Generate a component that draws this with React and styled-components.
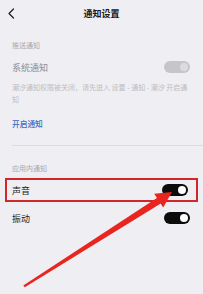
import React from "react";
import styled, { createGlobalStyle } from "styled-components";

const Global = createGlobalStyle`
  html, body { margin: 0; padding: 0; background: #efeef3; }
  body { font-family: "Noto Sans CJK SC", "Noto Sans", sans-serif; }
  * { box-sizing: border-box; }
`;

const Page = styled.div`
  position: relative;
  width: 203px;
  height: 294px;
  overflow: hidden;
  background: #efeef3;
  display: flex;
  flex-direction: column;
`;

const Header = styled.div`
  position: relative;
  height: 27px;
  display: flex;
  align-items: center;
  justify-content: center;
`;

const Back = styled.svg`
  position: absolute;
  left: 7px;
  top: 8px;
`;

const Title = styled.div`
  font-size: 9px;
  font-weight: 700;
  color: #151515;
  line-height: 1;
`;

const SectionLabel = styled.div`
  font-size: 7px;
  color: #a9a9ae;
  padding: 0 12px;
  height: 12px;
  line-height: 12px;
  margin-top: ${(p) => p.$top}px;
`;

const Row = styled.div`
  display: flex;
  align-items: center;
  justify-content: space-between;
  height: 24px;
  padding: 0 12px 0 12px;
  margin-top: ${(p) => p.$top || 0}px;
`;

const Highlight = styled.div`
  margin: ${(p) => p.$top}px 5px 0 5px;
  border: 2px solid #d1262a;
  height: 24px;
  display: flex;
  align-items: center;
  justify-content: space-between;
  padding: 0 7px 0 5px;
`;

const Label = styled.div`
  font-size: 9px;
  color: ${(p) => (p.$disabled ? "#8d8d92" : "#1b1b1b")};
  line-height: 1;
`;

const Toggle = styled.div`
  width: 26px;
  height: 12px;
  border-radius: 6px;
  background: ${(p) => (p.$disabled ? "#c6c6ca" : "#0c0c0c")};
  position: relative;
  flex: none;
  margin-right: 1px;
  &::after {
    content: "";
    position: absolute;
    right: 2px;
    top: 2px;
    width: 8px;
    height: 8px;
    border-radius: 50%;
    background: ${(p) => (p.$disabled ? "#dcdcdf" : "#ffffff")};
  }
`;

const Desc = styled.div`
  font-size: 7px;
  color: #bdbdc2;
  line-height: 12px;
  padding: 0 12px 0 12px;
  margin-top: 2px;
`;

const Link = styled.div`
  font-size: 7.7px;
  font-weight: 500;
  color: #3a6cc0;
  padding: 0 12px;
  margin-top: 13px;
  line-height: 12px;
`;

const Divider = styled.div`
  margin: 15px 0 0 12px;
  height: 1px;
  background: #dcdce0;
`;

const Arrow = styled.svg`
  position: absolute;
  left: 0;
  top: 0;
  pointer-events: none;
`;

export default function App() {
  return (
    <>
      <Global />
      <Page>
        <Header>
          <Back width="9" height="11" viewBox="0 0 9 11">
            <path d="M6.5 1 L2 5.5 L6.5 10" fill="none" stroke="#1a1a1a" strokeWidth="1.2" strokeLinecap="round" strokeLinejoin="round" />
          </Back>
          <Title>通知设置</Title>
        </Header>
        <SectionLabel $top={12}>推送通知</SectionLabel>
        <Row $top={4}>
          <Label $disabled>系统通知</Label>
          <Toggle $disabled />
        </Row>
        <Desc>潮汐通知权限被关闭，请先进入 设置 - 通知 - 潮汐 开启通知</Desc>
        <Link>开启通知</Link>
        <Divider />
        <SectionLabel $top={16}>应用内通知</SectionLabel>
        <Highlight $top={4}>
          <Label>声音</Label>
          <Toggle />
        </Highlight>
        <Row $top={4}>
          <Label>振动</Label>
          <Toggle />
        </Row>
        <Arrow width="203" height="294" viewBox="0 0 203 294">
          <polygon points="23.3,285.6 24.8,287.2 162.4,202.4 158.8,196.8" fill="#e8261f" />
          <polygon points="172,192 163.2,207.4 154.2,193.8" fill="#e8261f" />
        </Arrow>
      </Page>
    </>
  );
}
